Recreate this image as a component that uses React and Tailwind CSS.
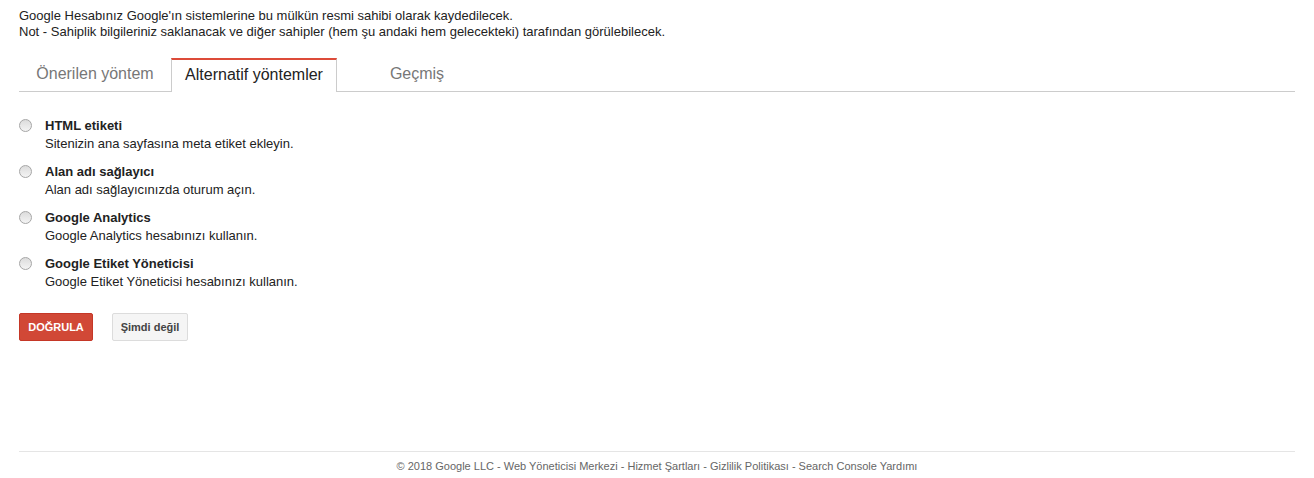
import React, { useState } from 'react';

const methods = [
  { id: 'html', title: 'HTML etiketi', desc: 'Sitenizin ana sayfasına meta etiket ekleyin.' },
  { id: 'domain', title: 'Alan adı sağlayıcı', desc: 'Alan adı sağlayıcınızda oturum açın.' },
  { id: 'analytics', title: 'Google Analytics', desc: 'Google Analytics hesabınızı kullanın.' },
  { id: 'gtm', title: 'Google Etiket Yöneticisi', desc: 'Google Etiket Yöneticisi hesabınızı kullanın.' }
];

function Radio({ checked }) {
  return (
    <span className="mt-[2px] flex h-[13px] w-[13px] shrink-0 items-center justify-center rounded-full border border-[#a6a6a6] bg-gradient-to-b from-[#dcdcdc] to-[#f4f4f4]">
      {checked && <span className="h-[5px] w-[5px] rounded-full bg-[#333]"></span>}
    </span>
  );
}

export default function App() {
  const [selected, setSelected] = useState(null);

  return (
    <div className="flex min-h-[478px] flex-col bg-white px-[19px] pt-[8px] font-['Liberation_Sans',Arial,sans-serif] text-[#222]">
      {/* Intro */}
      <div className="text-[13px] leading-[16px]">
        <p>Google Hesabınız Google'ın sistemlerine bu mülkün resmi sahibi olarak kaydedilecek.</p>
        <p>Not - Sahiplik bilgileriniz saklanacak ve diğer sahipler (hem şu andaki hem gelecekteki) tarafından görülebilecek.</p>
      </div>

      {/* Tabs */}
      <div className="mt-[18px] flex border-b border-[#cccccc]">
        <div className="flex h-[33px] w-[152px] items-center justify-center pb-[2px] text-[16px] text-[#777]">
          Önerilen yöntem
        </div>
        <div className="-mb-px flex h-[34px] w-[166px] items-center justify-center border-x border-t-2 border-[#cccccc] border-t-[#dd4b39] bg-white pb-[3px] text-[16px] text-[#222]">
          Alternatif yöntemler
        </div>
        <div className="flex h-[33px] w-[160px] items-center justify-center pb-[2px] text-[16px] text-[#777]">
          Geçmiş
        </div>
      </div>

      {/* Methods */}
      <div className="mt-[25px] flex flex-col gap-[10px]">
        {methods.map((m) => (
          <label key={m.id} className="flex cursor-pointer items-start gap-[13px]" onClick={() => setSelected(m.id)}>
            <Radio checked={selected === m.id} />
            <div className="text-[13px]">
              <div className="font-bold leading-[18px]">{m.title}</div>
              <div className="leading-[18px]">{m.desc}</div>
            </div>
          </label>
        ))}
      </div>

      {/* Actions */}
      <div className="mt-[22px] flex gap-[19px]">
        <button className="h-[28px] w-[74px] rounded-[2px] border border-[#c53727] bg-[#d14836] text-[11px] font-bold text-white">
          DOĞRULA
        </button>
        <button className="h-[28px] w-[76px] rounded-[2px] border border-[#dcdcdc] bg-[#f5f5f5] text-[11px] font-bold text-[#444]">
          Şimdi değil
        </button>
      </div>

      {/* Footer */}
      <div className="mt-[110px] border-t border-[#e5e5e5] pt-[7px] text-center text-[11px] leading-[14px] text-[#666]">
        © 2018 Google LLC - <a href="#">Web Yöneticisi Merkezi</a> - <a href="#">Hizmet Şartları</a> - <a href="#">Gizlilik Politikası</a> - <a href="#">Search Console Yardımı</a>
      </div>
    </div>
  );
}
